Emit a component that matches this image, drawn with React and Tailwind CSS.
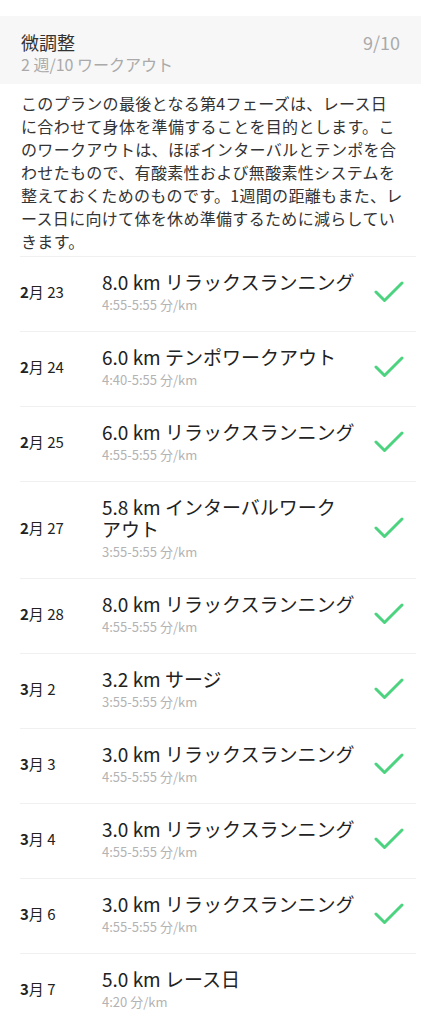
const rows = [
  { m: "2", d: "23", title: ["8.0 km リラックスランニング"], pace: "4:55-5:55 分/km", done: true },
  { m: "2", d: "24", title: ["6.0 km テンポワークアウト"], pace: "4:40-5:55 分/km", done: true },
  { m: "2", d: "25", title: ["6.0 km リラックスランニング"], pace: "4:55-5:55 分/km", done: true },
  { m: "2", d: "27", title: ["5.8 km インターバルワーク", "アウト"], pace: "3:55-5:55 分/km", done: true },
  { m: "2", d: "28", title: ["8.0 km リラックスランニング"], pace: "4:55-5:55 分/km", done: true },
  { m: "3", d: "2", title: ["3.2 km サージ"], pace: "3:55-5:55 分/km", done: true },
  { m: "3", d: "3", title: ["3.0 km リラックスランニング"], pace: "4:55-5:55 分/km", done: true },
  { m: "3", d: "4", title: ["3.0 km リラックスランニング"], pace: "4:55-5:55 分/km", done: true },
  { m: "3", d: "6", title: ["3.0 km リラックスランニング"], pace: "4:55-5:55 分/km", done: true },
  { m: "3", d: "7", title: ["5.0 km レース日"], pace: "4:20 分/km", done: false },
];

const descLines = [
  "このプランの最後となる第4フェーズは、レース日",
  "に合わせて身体を準備することを目的とします。こ",
  "のワークアウトは、ほぼインターバルとテンポを合",
  "わせたもので、有酸素性および無酸素性システムを",
  "整えておくためのものです。1週間の距離もまた、レ",
  "ース日に向けて体を休め準備するために減らしてい",
  "きます。",
];

const Check = () => (
  <svg width="30" height="22" viewBox="0 0 30 22" fill="none">
    <polyline
      points="2,11 10.5,19.5 28,2"
      stroke="#4cd37f"
      strokeWidth="3"
      strokeLinecap="round"
      strokeLinejoin="round"
    />
  </svg>
);

export default function App() {
  return (
    <div
      className="bg-white min-h-screen pt-4 text-[#222]"
      style={{ fontFamily: '"Noto Sans CJK JP", "Noto Sans", sans-serif' }}
    >
      {/* Header */}
      <div className="bg-[#f7f7f7] pt-[15px] pb-[9px] pl-[21px] pr-[21px] flex justify-between">
        <div>
          <div className="text-[18px] leading-[22px] text-[#333]">微調整</div>
          <div className="text-[16px] leading-[22px] text-[#aaa]">2 週/10 ワークアウト</div>
        </div>
        <div className="text-[18px] leading-[22px] text-[#aaa]">9/10</div>
      </div>

      {/* Description */}
      <p className="px-[21px] pt-[8px] pb-[3px] text-[16px] leading-[23px] text-[#333] tracking-[0.02em]">
        {descLines.map((l, i) => (
          <span key={i} className="block whitespace-nowrap">{l}</span>
        ))}
      </p>

      {/* Workouts */}
      <div>
        {rows.map((r, i) => (
          <div key={i} className="ml-[20px] mr-[5px] border-t border-[#f0f0f0] flex items-center pt-[14px] pb-[18px]">
            <div className="w-[82px] shrink-0 text-[15px] text-[#222]">
              <span className="font-bold">{r.m}</span>月 {r.d}
            </div>
            <div className="flex-1 min-w-0">
              {r.title.map((t, j) => (
                <div key={j} className="text-[19px] leading-[22px] text-[#222] whitespace-nowrap">{t}</div>
              ))}
              <div className="mt-[4px] text-[13px] leading-[16px] text-[#b3b3b3]">{r.pace}</div>
            </div>
            <div className="w-[50px] shrink-0 flex justify-center pr-[5px]">
              {r.done && <Check />}
            </div>
          </div>
        ))}
      </div>
    </div>
  );
}
